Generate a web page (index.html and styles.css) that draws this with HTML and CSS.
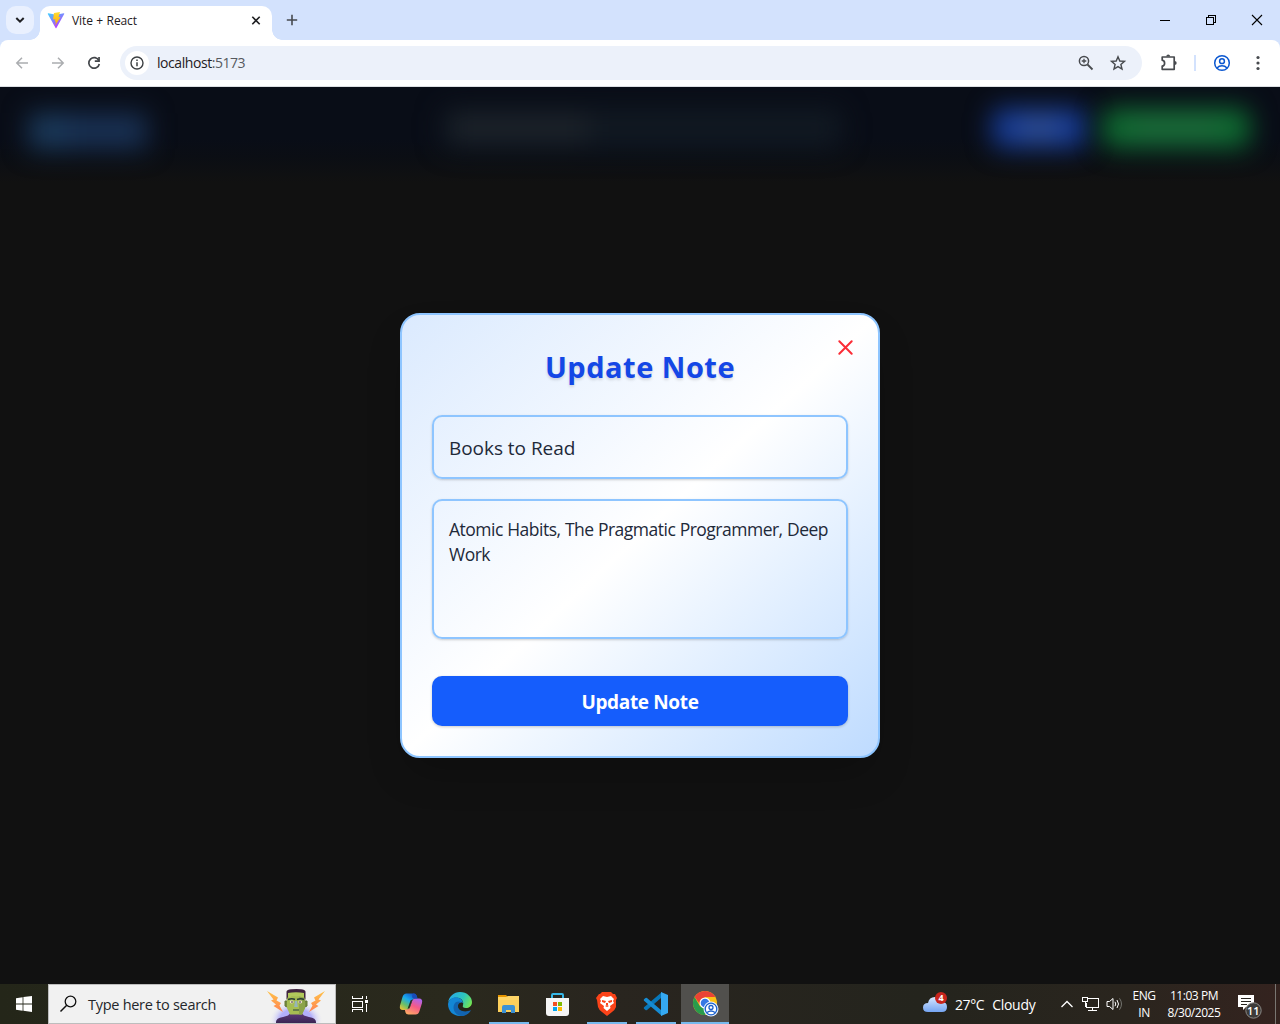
FILE: index.html
```html
<!DOCTYPE html>
<html lang="en">
<head>
<meta charset="utf-8">
<title>Vite + React</title>
<link rel="stylesheet" href="styles.css">
</head>
<body>
<div class="screen">
  <header class="tabstrip">
    <button class="tab-search" aria-label="Search tabs"><svg width="10" height="8" viewBox="0 0 10 8"><path d="M1.3 2 5 5.700 8.700 2" fill="none" stroke="#1f2023" stroke-width="2"/></svg></button>
    <div class="tab">
      <svg class="favicon" width="18" height="18" viewBox="0 0 18 18">
        <defs>
          <linearGradient id="vp" x1="0" y1="0" x2=".6" y2="1"><stop offset="0" stop-color="#41d1ff"/><stop offset="1" stop-color="#bd34fe"/></linearGradient>
          <linearGradient id="vy" x1="0" y1="0" x2="0" y2="1"><stop offset="0" stop-color="#ffdd35"/><stop offset="1" stop-color="#ffa800"/></linearGradient>
        </defs>
        <path d="M1.3 1.300 9 2.700 16.800 1.300Q17.500 1.300 17.200 2L9.400 16Q9 16.400 8.600 16L.8 2Q.6 1.300 1.300 1.300Z" fill="url(#vp)"/>
        <path d="M13 0 7 1.100 6 7.600 8.300 7.200 7.800 9.800 9 9.500 8 13.800 13.600 4.900 11.500 5.200Z" fill="url(#vy)"/>
      </svg>
      <span class="tab-title">Vite + React</span>
      <svg width="10" height="10" viewBox="0 0 10 10"><path d="m1.300 .8 7.400 7.400m0-7.400L1.300 8.200" stroke="#1f2023" stroke-width="1.6"/></svg>
    </div>
    <svg class="new-tab" width="12" height="12" viewBox="0 0 12 12"><path d="M6 .8v10.400M.8 6h10.400" stroke="#474a4f" stroke-width="1.6"/></svg>
    <div class="window-controls">
      <svg width="12" height="12" viewBox="0 0 12 12" shape-rendering="crispEdges"><path d="M1 6.500h10" stroke="#000"/></svg>
      <svg width="12" height="12" viewBox="0 0 12 12" shape-rendering="crispEdges"><path d="M1.500 3.500h7v7h-7zM3.500 3.500v-2h7v7h-2" fill="none" stroke="#000"/></svg>
      <svg width="12" height="12" viewBox="0 0 12 12"><path d="m1 1 10 10M11 1 1 11" stroke="#000" stroke-width="1.100"/></svg>
    </div>
  </header>

  <nav class="toolbar">
    <div class="nav-buttons">
      <svg width="16" height="16" viewBox="0 0 16 16" fill="none" stroke="#abadb0" stroke-width="1.500"><path d="M14 8H3M8 2.800 2.800 8 8 13.200"/></svg>
      <svg width="16" height="16" viewBox="0 0 16 16" fill="none" stroke="#abadb0" stroke-width="1.500"><path d="M2 8h11M8 2.800 13.200 8 8 13.200"/></svg>
      <svg width="16" height="16" viewBox="0 0 16 16"><path d="M12.900 5.600A5.300 5.300 0 1 0 13.300 9" fill="none" stroke="#43464a" stroke-width="1.700"/><path d="M13.900 1.900v5H8.800V5.200h3.400V1.900Z" fill="#43464a"/></svg>
    </div>
    <div class="omnibox">
      <span class="site-info"><svg width="14" height="14" viewBox="0 0 14 14"><circle cx="7" cy="7" r="6" fill="none" stroke="#3c4043" stroke-width="1.400"/><path d="M7 6.200v4M7 3.600v1.500" stroke="#3c4043" stroke-width="1.500"/></svg></span>
      <span class="url">localhost<span class="port">:5173</span></span>
      <svg width="16" height="16" viewBox="0 0 16 16" fill="none" stroke="#474a4e"><circle cx="6" cy="6" r="4.600" stroke-width="1.500"/><path d="m9.500 9.500 5 5" stroke-width="1.800"/><path d="M6 3.700v4.600M3.700 6h4.600" stroke-width="1.300"/></svg>
      <svg width="16" height="16" viewBox="0 0 16 16"><path d="m8 1.700 1.800 4.300 4.700.4-3.600 3.100 1.100 4.600L8 11.600l-4 2.500 1.100-4.600L1.500 6.400 6.200 6Z" fill="none" stroke="#474a4e" stroke-width="1.400"/></svg>
    </div>
    <div class="toolbar-actions">
      <svg width="18" height="18" viewBox="0 0 18 18"><path d="M2.200 3h12v12.300h-12v-3.100q2.400-.4 2.400-3t-2.400-3Z" fill="none" stroke="#474a4e" stroke-width="1.700" stroke-linejoin="round"/><path d="M6.200 2.500q.2-2 2-2t2 2ZM14.500 7.100q2.200.2 2.200 2t-2.200 2Z" fill="#474a4e"/></svg>
      <i class="divider"></i>
      <svg width="18" height="18" viewBox="0 0 18 18" fill="none" stroke="#0b57d0" stroke-width="1.500"><circle cx="9" cy="9" r="7.300"/><circle cx="9" cy="7.200" r="2.400"/><path d="M4 14q2-2.200 5-2.200t5 2.200"/></svg>
      <svg width="4" height="16" viewBox="0 0 4 16" fill="#474a4e"><circle cx="2" cy="2.500" r="1.600"/><circle cx="2" cy="8" r="1.600"/><circle cx="2" cy="13.500" r="1.600"/></svg>
    </div>
  </nav>

  <main class="page">
    <div class="page-header" aria-hidden="true">
      <i class="blur brand"><i></i></i>
      <i class="blur search"><i></i></i>
      <i class="blur login"><i></i></i>
      <i class="blur signup"><i></i></i>
    </div>
    <form class="modal">
      <svg class="modal-close" width="17" height="17" viewBox="0 0 17 17"><path d="m2.300 2.300 12.400 12.400M14.700 2.300 2.300 14.700" stroke="#fb2c36" stroke-width="2" stroke-linecap="round"/></svg>
      <h1 class="modal-title">Update Note</h1>
      <div class="field note-title">Books to Read</div>
      <div class="field note-body">Atomic Habits, The Pragmatic Programmer, Deep<br>Work</div>
      <button class="submit" type="button">Update Note</button>
    </form>
  </main>

  <footer class="taskbar">
    <div class="start"><svg width="16" height="16" viewBox="0 0 16 16" fill="#fff"><path d="M0 2.200 6.600 1.300v6.300H0zM7.400 1.100 16 0v7.600H7.400zM0 8.400h6.600v6.300L0 13.800zM7.400 8.400H16V16l-8.600-1.200z"/></svg></div>
    <div class="task-search">
      <svg width="18" height="18" viewBox="0 0 18 18"><circle cx="10.500" cy="6.500" r="5.300" fill="none" stroke="#111" stroke-width="1.300"/><path d="M6.700 10.300.5 16.500" stroke="#111" stroke-width="1.500"/></svg>
      <span>Type here to search</span>
      <svg class="monster" width="62" height="36" viewBox="0 0 62 36">
        <defs>
          <radialGradient id="halo"><stop offset=".6" stop-color="#b3b0fb"/><stop offset="1" stop-color="#f1f1f1" stop-opacity="0"/></radialGradient>
          <linearGradient id="bolt" x1="0" y1="0" x2="0" y2="1"><stop offset="0" stop-color="#ffc247"/><stop offset="1" stop-color="#ff8353"/></linearGradient>
          <linearGradient id="robe" x1="0" y1="0" x2="0" y2="1"><stop offset="0" stop-color="#5d3a78"/><stop offset="1" stop-color="#32204c"/></linearGradient>
        </defs>
        <ellipse cx="30" cy="32" rx="27" ry="19" fill="url(#halo)"/>
        <path d="M1 3 12 9.500l-1.500 3 4.500 2.500-1.500 2.500L17 24 7.500 18l2.500-1.500-5-4 2.500-1Z" fill="url(#bolt)"/>
        <path d="M59 3 48 9.500l1.500 3-4.500 2.500 1.500 2.500L43 24l9.500-6-2.500-1.500 5-4-2.500-1Z" fill="url(#bolt)"/>
        <path d="M10 37v-3q0-4 7-5l5-1.500 2-2h12l2 2 5 1.500q7 1 7 5v3Z" fill="url(#robe)"/>
        <path d="M21 13h-2v5l2 1M39 13h2v5l-2 1" fill="#778d40" stroke="#647635"/>
        <path d="M21 5h18v15l-3 6.500H24L21 20Z" fill="#a6bd52"/>
        <path d="M33 8h6v12l-3 6.500h-3Z" fill="#8ca34a"/>
        <path d="M20.500 12V3.500Q21 1.800 25 1.300q6-.8 10 0 4 .6 4.500 2.200V12L38 9q-8-2-16 0Z" fill="#40243f"/>
        <path d="M22 5q8-1.500 16 0v4.500q-8-2-16 0Z" fill="#b1c85b"/>
        <path d="M22 11.500q4-1.500 7 0M31 11.500q4-1.500 7 0" fill="none" stroke="#283b34" stroke-width="1.400"/>
        <ellipse cx="25.700" cy="14" rx="1.900" ry="1.400" fill="#eee0d0"/><ellipse cx="34.300" cy="14" rx="1.900" ry="1.400" fill="#eee0d0"/>
        <circle cx="26" cy="14" r=".8" fill="#27242d"/><circle cx="34" cy="14" r=".8" fill="#27242d"/>
        <path d="M29 13h2l.8 6h-3.600Z" fill="#96b5ba"/><path d="M27 22h6" stroke="#3e5543" stroke-width="1.200"/>
      </svg>
    </div>
    <div class="app"><svg width="18" height="16" viewBox="0 0 18 16" fill="none" stroke="#fff" shape-rendering="crispEdges"><path d="M1.500 0v2.500h10V0M1.500 5.500h10v6h-10zM1.500 16v-2.500h10V16M15.500 0v3M15.500 8v8"/><path d="M14 4h3v3h-3z" fill="#fff" stroke="none"/></svg></div>
    <div class="app copilot"><svg width="24" height="24" viewBox="0 0 24 24">
      <defs><linearGradient id="cb" x1=".8" y1="0" x2=".1" y2="1"><stop offset="0" stop-color="#164bc1"/><stop offset=".4" stop-color="#18a9ef"/><stop offset=".7" stop-color="#69bf69"/><stop offset="1" stop-color="#f3c331"/></linearGradient><linearGradient id="cp" x1=".7" y1="0" x2=".2" y2="1"><stop offset="0" stop-color="#ae64ea"/><stop offset=".45" stop-color="#f65a86"/><stop offset="1" stop-color="#ffad63"/></linearGradient></defs>
      <path d="M7.500 1.500H15q2 0 2.600 2l.9 3H16q-2.500 0-3.300 3l-1.700 5.500q-.8 3-3.500 3H4q-4 0-3-4.500l2.500-8.500q1-3.500 4-3.500Z" fill="url(#cb)"/>
      <path d="M16.500 22.500H9.500q-2.500 0-3-2L5.800 17.500H8q2.500 0 3.300-3L13 9.500q.8-3 3.500-3H20q4 0 3 4.500l-2.500 8q-1 3.500-4 3.500Z" fill="url(#cp)"/>
      <path d="m11.500 8.500 2-1-3 8.500-2 1Z" fill="#2c2c20"/><path d="M14.500 1.500q2.500 0 3.100 2l.9 3h-3.300q-2.500 0-2-3 .2-2 1.300-2Z" fill="#184bb8"/>
    </svg></div>
    <div class="app edge"><svg width="24" height="24" viewBox="0 0 24 24">
      <defs><linearGradient id="eg" x1="0" y1=".3" x2="1" y2=".7"><stop offset="0" stop-color="#27a8e8"/><stop offset=".55" stop-color="#2dc5bd"/><stop offset="1" stop-color="#75e650"/></linearGradient></defs>
      <path d="M0 11C1 4 6 0 12 0c7 0 12 5 12 10 0 4-3 6-6 6-3 0-4-1-3-3 1-3-1-6-4-7-5-1-10 1-11 5Z" fill="url(#eg)"/>
      <path d="M0 12C1 6 7 4 11 6c3 1 4 4 4 5-2-1-5 1-5 4 0 5 6 7 12 4-3 4-7 5-10 5C5 24 0 19 0 12Z" fill="#1387d5"/>
      <path d="M8 10c-5 4-2 13 5 14 4 0 8-2 10-6-6 3-13 1-13-4 0-2 1-3 3-4q-2-1-5 0Z" fill="#1264b0"/>
      <path d="M10 13q1-3 4-2.500 1 1 .5 2.500-1 2 1 3 4 1 7.500-1-1 3-5 4-8 0-8-6Z" fill="#252419"/>
    </svg></div>
    <div class="app running"><svg width="24" height="24" viewBox="0 0 24 24"><path d="M1 3h8l2 2H1Z" fill="#e69500"/><path d="M1 5h8l2-1h11v16H1Z" fill="#ffd668"/><path d="M1 8h21v12H1Z" fill="#fdd05b"/><path d="M5 21v-6q0-2 2-2h9q2 0 2 2v6h-4v-3H9v3Z" fill="#3b91d4"/></svg></div>
    <div class="app"><svg width="24" height="24" viewBox="0 0 24 24"><path d="M6 6V3q0-1 1-1h9q1 0 1 1v3" fill="none" stroke="#37b8e8" stroke-width="2"/><path d="M0 6h23v15q0 3-3 3H3q-3 0-3-3Z" fill="#f5f5f5"/><path d="M7 10h4v4H7z" fill="#f25022"/><path d="M12 10h4v4h-4z" fill="#7fba00"/><path d="M7 15h4v4H7z" fill="#00a4ef"/><path d="M12 15h4v4h-4z" fill="#ffb900"/></svg></div>
    <div class="app running"><svg width="24" height="24" viewBox="0 0 24 24"><path d="m7 0h9l2 2h2l2 4-1 2v7q-1 3-4 5l-5 4-5-4q-3-2-4-5L2 8 1 6l3-4h1Z" fill="#fb4319"/><path d="m8 4 4 1 4-1 3 3-1 2 1 2-4 3 .5 2-3.500 3-3.500-3L9 14l-4-3 1-2-1-2Z" fill="#fff"/><path d="m7 8 4 1-1 2-3-1M17 8l-4 1 1 2 3-1M10 14l2-1 2 1-2 1M11 11h2v2h-2" fill="#fb4319"/></svg></div>
    <div class="app running vscode"><svg width="24" height="24" viewBox="0 0 24 24"><path d="m18 0-1 6L3 18q-1 .5-1.500 0L0 16.800q-.5-.8 0-1.500Z" fill="#0877b9"/><path d="M1.500 6q.7-.6 1.500 0l14 12 1 6L0 8.700q-.5-.8 0-1.500Z" fill="#168bd2"/><path d="M17 0 24 3v18l-7 3Z" fill="#35a9f2"/></svg></div>
    <div class="app running active"><svg width="26" height="26" viewBox="0 0 26 26"><circle cx="13" cy="12" r="12" fill="#fbc116"/><path d="M2.600 6 7.800 15 13 18v6A12 12 0 0 1 2.600 6Z" fill="#299b4c"/><path d="M13 24l5.200-9L13 12l-4 4v7Z" fill="#299b4c"/><path d="M2.600 6A12 12 0 0 1 23.400 6H13l-5.200 7Z" fill="#ea4335"/><circle cx="13" cy="12" r="5.500" fill="#fff"/><circle cx="13" cy="12" r="4.300" fill="#3578e5"/><circle cx="19" cy="18" r="7.500" fill="#e6f0ff"/><circle cx="19" cy="18" r="5.800" fill="#fff" stroke="#1b61cc" stroke-width="1.300"/><circle cx="19" cy="16.500" r="2" fill="none" stroke="#1b61cc" stroke-width="1.300"/><path d="M15 21.500q4-3 8 0" fill="none" stroke="#1b61cc" stroke-width="1.300"/></svg></div>
    <div class="tray">
      <div class="weather">
        <svg width="26" height="24" viewBox="0 0 26 24"><defs><linearGradient id="cl" x1="0" y1="0" x2="0" y2="1"><stop offset="0" stop-color="#d6e7ff"/><stop offset="1" stop-color="#75a5f2"/></linearGradient></defs><path d="M6 20q-5 0-5-4.500T6 11q1-6 7-6 5 0 7 5 5 0 5 5t-5 5Z" fill="url(#cl)"/><circle cx="19" cy="6" r="6" fill="#c8251d"/><text x="19" y="9.300" text-anchor="middle" class="badge-text">4</text></svg>
        <span class="temp">27°C</span><span class="sky">Cloudy</span>
      </div>
      <div class="status">
        <svg width="12" height="8" viewBox="0 0 12 8"><path d="m.5 7 5.500-5.500L11.500 7" fill="none" stroke="#fff" stroke-width="1.300"/></svg>
        <svg width="17" height="14" viewBox="0 0 17 14" fill="none" stroke="#fff" shape-rendering="crispEdges"><path d="M6 1.500h10.500v9h-12V6M10.500 10.500v3M6 13.500h9M.5.500h5v4h-5zM3.500 4.500v5"/></svg>
        <svg width="17" height="14" viewBox="0 0 17 14" fill="none" stroke="#fff"><path d="M1 4.500h2.500L7 1.500v11L3.500 9.500H1ZM9 4.800q1.500 2.200 0 4.400M11 3q3 4 0 8"/><path d="M13.500 1.300q4 5.700 0 11.400" stroke="#74746f"/></svg>
      </div>
      <div class="stack lang"><span>ENG</span><span>IN</span></div>
      <div class="stack clock"><span>11:03 PM</span><span class="date">8/30/2025</span></div>
      <svg class="notify" width="26" height="26" viewBox="0 0 26 26"><path d="M1 3h16v12H9l-3 3v-3H1Z" fill="#fff"/><path d="M4 6.500h10M4 9.500h10M4 12.500h6" stroke="#28241f"/><circle cx="16.500" cy="18.500" r="7.700" fill="#3d3b39" stroke="#8b8986"/><text x="16.300" y="22.500" text-anchor="middle" class="count-text">11</text></svg>
      <i class="show-desktop"></i>
    </div>
  </footer>
</div>
</body>
</html>
```
FILE: styles.css
```css
* { box-sizing: border-box; }
body { margin: 0; overflow: hidden; font-family: "Open Sans", "Noto Sans", sans-serif; }
svg { display: block; flex: none; overflow: visible; }
button { border: 0; padding: 0; font: inherit; }
.screen { display: grid; grid-template-rows: 40px 47px 897px 40px; width: 1280px; height: 1024px; background: #d3e2fd; }

.tabstrip { display: flex; background: #d3e2fd; padding-left: 6px; }
.tab-search { width: 28px; height: 28px; margin: 6px 6px 0 0; border-radius: 10px; background: #e9f0fe; display: grid; place-items: center; }
.tab { position: relative; width: 232px; height: 34px; margin-top: 6px; padding: 0 11px 5px 7px; display: flex; align-items: center; background: #fff; border-radius: 10px 10px 0 0; }
.tab::before, .tab::after { content: ""; position: absolute; bottom: 0; width: 10px; height: 10px; }
.tab::before { left: -10px; background: radial-gradient(circle at 0 0, transparent 9.500px, #fff 10px); }
.tab::after { right: -10px; background: radial-gradient(circle at 100% 0, transparent 9.500px, #fff 10px); }
.tab-title { margin-left: 7px; flex: 1; font-size: 12px; letter-spacing: -.1px; word-spacing: .5px; color: #1f2023; }
.new-tab { margin: 14px 0 0 14px; }
.window-controls { margin: 14px 17px 0 auto; display: flex; gap: 34px; }

.toolbar { display: flex; align-items: flex-start; padding-top: 6px; background: #fff; border-bottom: 1px solid #dcdfe3; border-radius: 8px 8px 0 0; }
.nav-buttons { display: flex; gap: 20px; padding: 9px 0 0 14px; width: 120px; }
.omnibox { width: 1022px; height: 34px; border-radius: 17px; background: #ecf1fa; display: flex; align-items: center; padding: 0 16px 0 5px; }
.omnibox > svg + svg { margin-left: 16px; }
.site-info { width: 24px; height: 24px; border-radius: 50%; background: #fff; display: grid; place-items: center; }
.url { flex: 1; margin: -1px 0 0 8px; font-size: 14px; letter-spacing: -.44px; color: #1f2023; }
.port { color: #56595e; }
.toolbar-actions { display: flex; align-items: center; height: 34px; padding-left: 18px; }
.divider { width: 2px; height: 16px; margin: 0 17px 0 16px; background: #d3e2fd; }
.toolbar-actions svg:last-child { margin-left: 25px; }

.page { background: #111; display: flex; flex-direction: column; align-items: center; overflow: hidden; }
.page-header { align-self: stretch; flex: none; height: 96px; display: flex; align-items: flex-start; background: linear-gradient(#090d17 52px, #0b0e14 70px, #111 96px); padding: 21px 30px 0 26px; }
.blur { flex: none; display: block; height: 40px; border-radius: 10px; filter: blur(13px); }
.blur i { display: block; height: 100%; }
.brand { width: 118px; height: 36px; margin: 5px 0 0 3px; background: #193154; border-radius: 2px; }
.brand i { width: 38px; background: #1b3a5c; }
.search { display: flex; width: 400px; margin-left: 295px; background: #111922; }
.search i { width: 136px; height: 24px; margin: 8px 10px; background: #1e242b; }
.login { width: 94px; margin-left: 150px; background: #163b96; }
.login i { width: 42px; height: 18px; margin: 0 26px; transform: translateY(11px); background: #365392; }
.signup { width: 148px; margin-left: 16px; background: #0e6c31; }
.signup i { width: 90px; height: 14px; margin: 0 28px; transform: translateY(13px); background: #256b40; }

.modal { position: relative; flex: none; width: 480px; height: 445px; margin-top: 130px; border: 2px solid #8ec5ff; border-radius: 20px; padding: 30px; display: flex; flex-direction: column; background: linear-gradient(to bottom right in oklab, #dbeafe, #fff 50%, #bedbff); box-shadow: 0 20px 40px -10px #0004; }
.modal-close { position: absolute; top: 24px; right: 24px; }
.modal-title { height: 44px; margin: 0 0 26px; text-align: center; color: #1447e6; font-size: 29px; line-height: 43px; font-weight: 700; letter-spacing: .5px; text-shadow: 0 2px 3px #0002; }
.field { border: 2px solid #8ec5ff; border-radius: 10px; color: #1e2939; padding: 0 15px; box-shadow: 0 1px 3px #0002, 0 1px 2px #0001; }
.note-title { height: 64px; line-height: 62px; font-size: 19px; letter-spacing: -.04px; }
.note-body { height: 140px; margin-top: 20px; padding-top: 16px; line-height: 25px; font-size: 17.500px; letter-spacing: -.5px; word-spacing: .3px; white-space: nowrap; }
.submit { height: 50px; margin-top: 37px; border-radius: 10px; background: #155dfc; color: #fff; font-size: 19px; line-height: 52px; font-weight: 700; letter-spacing: -.35px; box-shadow: 0 1px 3px #0003; }

.taskbar { display: flex; color: #fff; background: linear-gradient(90deg, #242619, #2a291d 35%, #29251f 48%, #24241d 72%, #2a251e 88%, #34231f); }
.start { width: 48px; display: grid; place-items: center; }
.task-search { width: 288px; height: 40px; border: 1px solid #bdbdbd; background: #f1f1f1; display: flex; align-items: center; padding-left: 11px; color: #24272b; font-size: 14.500px; letter-spacing: -.28px; overflow: hidden; }
.task-search > span { margin-left: 10px; flex: 1; white-space: nowrap; }
.monster { margin: 4px 7px 0 0; }
.app { width: 48px; margin-right: 1px; display: grid; place-items: center; }
.copilot { margin-left: 2px; }
.running { border-bottom: 2px solid #76b9ed; padding-top: 2px; width: 40px; margin-left: 4px; margin-right: 5px; }
.active { width: 48px; margin-left: 0; background: #51504d; }
.tray { margin-left: auto; display: flex; align-items: center; }
.weather { display: flex; align-items: center; width: 139px; font-size: 14px; }
.temp { margin-left: 7px; letter-spacing: -.4px; }
.sky { margin-left: 8px; letter-spacing: -.3px; }
.badge-text { font-size: 9px; font-weight: 700; fill: #fff; }
.status { display: flex; align-items: center; gap: 10px; }
.status svg:nth-child(2) { margin-left: -1px; }
.status svg:last-child { margin-left: -3px; }
.stack { display: flex; flex-direction: column; align-items: center; font-size: 12px; line-height: 17px; white-space: nowrap; }
.lang { width: 24px; margin-left: 9px; letter-spacing: -.5px; }
.clock { width: 54px; margin-left: 11px; letter-spacing: -.45px; }
.notify { margin: 2px 0 0 16px; }
.count-text { font-size: 11px; fill: #fff; font-weight: 600; }
.show-desktop { height: 40px; width: 1px; margin: 0 4px 0 12px; background: #797672; }
```
